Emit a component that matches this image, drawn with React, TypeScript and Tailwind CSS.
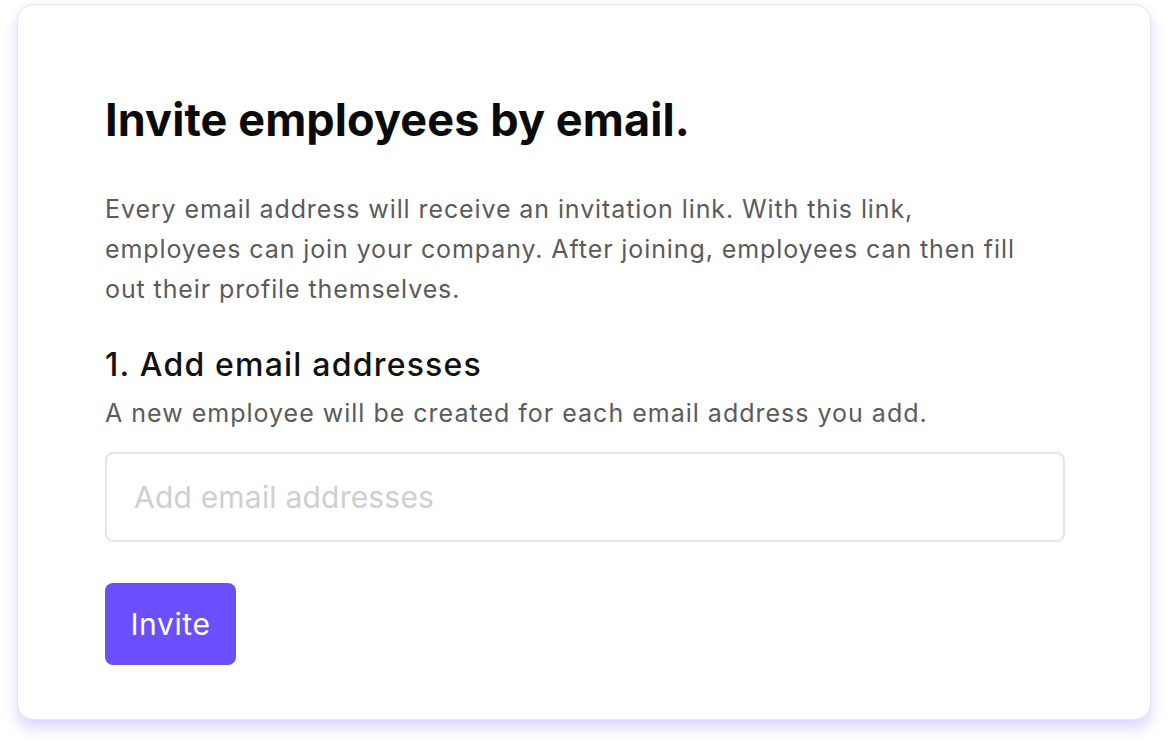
import React from "react";

const App: React.FC = () => {
  return (
    <div className="min-h-[749px] w-[1168px] bg-white pl-[17px] pt-[4px]" style={{ fontFamily: "Inter, 'Noto Sans', sans-serif" }}>
      <div className="w-[1134px] h-[716px] rounded-[16px] bg-white border border-[#e4e1fb] shadow-[0_8px_14px_rgba(120,105,255,0.28)] pl-[87px] pt-[87px]">
        {/* Title */}
        <h1 className="text-[45px] leading-[56px] font-bold text-[#0a0a0a] tracking-[0.1px]">Invite employees by email.</h1>

        {/* Intro */}
        <p className="mt-[41px] text-[25px] leading-[40px] tracking-[0.9px] text-[#5b5b5b]">
          Every email address will receive an invitation link. With this link,
          <br />
          employees can join your company. After joining, employees can then fill
          <br />
          out their profile themselves.
        </p>

        {/* Step 1 */}
        <h2 className="mt-[36px] text-[32px] leading-[40px] font-medium tracking-[1.2px] text-[#111]">1. Add email addresses</h2>
        <p className="mt-[13px] text-[25px] leading-[30px] tracking-[1px] text-[#5b5b5b]">A new employee will be created for each email address you add.</p>

        <div className="mt-[24px] w-[960px] h-[90px] rounded-[8px] border-2 border-[#e5e5e5] flex items-center px-[27px]">
          <input
            className="w-full outline-none bg-transparent text-[30px] tracking-[0.2px] text-[#222] placeholder:text-[#cfcfcf]"
            placeholder="Add email addresses"
          />
        </div>

        <button className="mt-[41px] w-[131px] h-[82px] rounded-[8px] bg-[#6a4fff] text-white text-[30px] tracking-[0.6px]">Invite</button>
      </div>
    </div>
  );
};

export default App;
